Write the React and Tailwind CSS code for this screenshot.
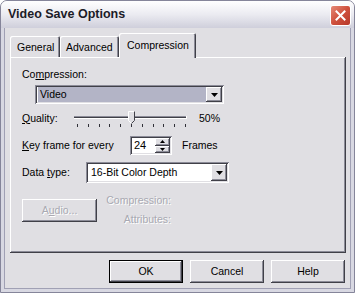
const raised =
  "shadow-[inset_-1px_-1px_0_#404048,inset_1px_1px_0_#ffffff,inset_-2px_-2px_0_#8c8c98]";
const sunken =
  "shadow-[inset_1px_1px_0_#8c8c98,inset_-1px_-1px_0_#ffffff,inset_2px_2px_0_#404048,inset_-2px_-2px_0_#e0dfe3]";

function Arrow({ up }) {
  return (
    <svg width="7" height="4" viewBox="0 0 7 4">
      <polygon points={up ? "3.5,0 7,4 0,4" : "0,0 7,0 3.5,4"} fill="#000" />
    </svg>
  );
}

function Combo({ value, width, selected }) {
  return (
    <div className={`${sunken} bg-white h-full flex items-center p-[2px]`} style={{ width }}>
      <div className="flex-1 h-full flex items-center pl-[1px]">
        <span className={`${selected ? "bg-[#b3b4c6]" : ""} flex-1 h-full flex items-center pl-[2px]`}>
          {value}
        </span>
      </div>
      <div className={`${raised} bg-[#e0dfe3] w-[16px] h-full flex items-center justify-center`}>
        <Arrow />
      </div>
    </div>
  );
}

function Slider() {
  const ticks = Array.from({ length: 11 }, (_, i) => 4 + i * 10.8);
  return (
    <svg width="116" height="20" viewBox="0 0 116 20">
      <line x1="1" y1="8.5" x2="113" y2="8.5" stroke="#8c8c98" />
      <line x1="1" y1="9.5" x2="113" y2="9.5" stroke="#404048" />
      <line x1="1" y1="10.5" x2="113" y2="10.5" stroke="#ffffff" />
      <line x1="113.5" y1="8" x2="113.5" y2="11" stroke="#ffffff" />
      {ticks.map((x, i) => (
        <line key={i} x1={Math.round(x) + 0.5} y1="16" x2={Math.round(x) + 0.5} y2="19" stroke="#303038" />
      ))}
      <path d="M55.5 3.5 H61.5 V12.5 L58.5 15.5 L55.5 12.5 Z" fill="#e0dfe3" stroke="#ffffff" />
      <path d="M61.5 3.5 V12.5 L58.5 15.5" fill="none" stroke="#404048" />
    </svg>
  );
}

function Button({ children, def, disabled, w = "w-[74px]" }) {
  return (
    <div
      className={`${w} h-[23px] bg-[#e0dfe3] flex items-center justify-center ${
        def
          ? "shadow-[inset_0_0_0_1px_#000000,inset_-2px_-2px_0_#404048,inset_2px_2px_0_#ffffff,inset_-3px_-3px_0_#8c8c98]"
          : raised
      } ${disabled ? "text-[#a9a9b2] [text-shadow:1px_1px_0_#ffffff]" : "text-black"}`}
    >
      {children}
    </div>
  );
}

export default function App() {
  return (
    <div className="w-[355px] h-[293px] bg-[#e0dfe3] font-['Liberation_Sans',Arial,sans-serif] text-[10.5px] leading-[13px] text-black flex flex-col border border-[#85859a] rounded-t-[7px] overflow-hidden">
      {/* title bar */}
      <div className="h-[27px] shrink-0 flex items-center justify-between pl-[7px] pr-[3px] bg-gradient-to-b from-[#ffffff] via-[#ebebf1] to-[#cfcfdb]">
        <span className="font-bold text-[12.5px] text-[#1c1c28]">Video Save Options</span>
        <div className="w-[21px] h-[21px] rounded-[3px] border border-white bg-gradient-to-br from-[#e58a78] via-[#cf503c] to-[#b7382a] flex items-center justify-center mt-[2px]">
          <svg width="11" height="11" viewBox="0 0 11 11">
            <path d="M1.5 1.5 L9.5 9.5 M9.5 1.5 L1.5 9.5" stroke="#fff" strokeWidth="2" strokeLinecap="square" />
          </svg>
        </div>
      </div>

      {/* body */}
      <div className="flex-1 flex flex-col border-x-[3px] border-b-[3px] border-[#d8d8e2] shadow-[inset_1px_0_0_#a0a0b4,inset_-1px_0_0_#a0a0b4,inset_0_-1px_0_#a0a0b4] pl-[6px] pr-[5px]">
        {/* tabs */}
        <div className="h-[24px] mt-[5px] flex items-end relative z-10">
          <div className="w-[50px] h-[21px] rounded-t-[2px] shadow-[inset_1px_1px_0_#ffffff,inset_-1px_0_0_#404048,inset_-2px_0_0_#8c8c98] pl-[7px] pt-[5px]">
            General
          </div>
          <div className="w-[59px] h-[21px] rounded-t-[2px] shadow-[inset_1px_1px_0_#ffffff,inset_-1px_0_0_#404048,inset_-2px_0_0_#8c8c98] pl-[6px] pt-[5px]">
            Advanced
          </div>
          <div className="w-[77px] h-[25px] mb-[-1px] bg-[#e0dfe3] rounded-t-[2px] shadow-[inset_1px_1px_0_#ffffff,inset_-1px_0_0_#404048,inset_-2px_0_0_#8c8c98] pl-[8px] pt-[6px]">
            Compression
          </div>
        </div>

        {/* panel */}
        <div className={`h-[196px] w-[336px] ${raised} pl-[12px] pt-[11px] flex flex-col`}>
          <div className="h-[13px]">
            Co<span className="underline">m</span>pression:
          </div>
          <div className="h-[19px] mt-[4px] ml-[13px]">
            <Combo value="Video" width={189} selected />
          </div>

          <div className="h-[20px] mt-[4px] flex items-center">
            <span className="w-[51px]">
              <span className="underline">Q</span>uality:
            </span>
            <Slider />
            <span className="ml-[10px]">50%</span>
          </div>

          <div className="h-[19px] mt-[8px] flex items-center">
            <span className="w-[108px]">
              <span className="underline">K</span>ey frame for every
            </span>
            <div className={`${sunken} bg-white w-[42px] h-full flex items-center p-[2px]`}>
              <span className="flex-1 pl-[2px] text-[11px]">24</span>
              <div className="flex flex-col w-[15px] h-full">
                <div className={`${raised} bg-[#e0dfe3] flex-1 flex items-center justify-center`}>
                  <svg width="5" height="3" viewBox="0 0 5 3"><polygon points="2.5,0 5,3 0,3" fill="#000" /></svg>
                </div>
                <div className={`${raised} bg-[#e0dfe3] flex-1 flex items-center justify-center`}>
                  <svg width="5" height="3" viewBox="0 0 5 3"><polygon points="0,0 5,0 2.5,3" fill="#000" /></svg>
                </div>
              </div>
            </div>
            <span className="ml-[10px]">Frames</span>
          </div>

          <div className="h-[21px] mt-[7px] flex items-center">
            <span className="w-[64px]">
              Data <span className="underline">t</span>ype:
            </span>
            <Combo value="16-Bit Color Depth" width={143} />
          </div>

          <div className="mt-[16px] flex items-start">
            <Button disabled w="w-[75px]">
              A<span className="underline">u</span>dio...
            </Button>
            <div className="w-[74px] mt-[-8px] text-right leading-[19px] text-[#a9a9b2] [text-shadow:1px_1px_0_#ffffff]">
              <div>Compression:</div>
              <div>Attributes:</div>
            </div>
          </div>
        </div>

        {/* buttons */}
        <div className="mt-[7px] flex justify-end gap-[7px] pr-[1px]">
          <Button def>OK</Button>
          <Button>Cancel</Button>
          <Button>Help</Button>
        </div>
      </div>
    </div>
  );
}
